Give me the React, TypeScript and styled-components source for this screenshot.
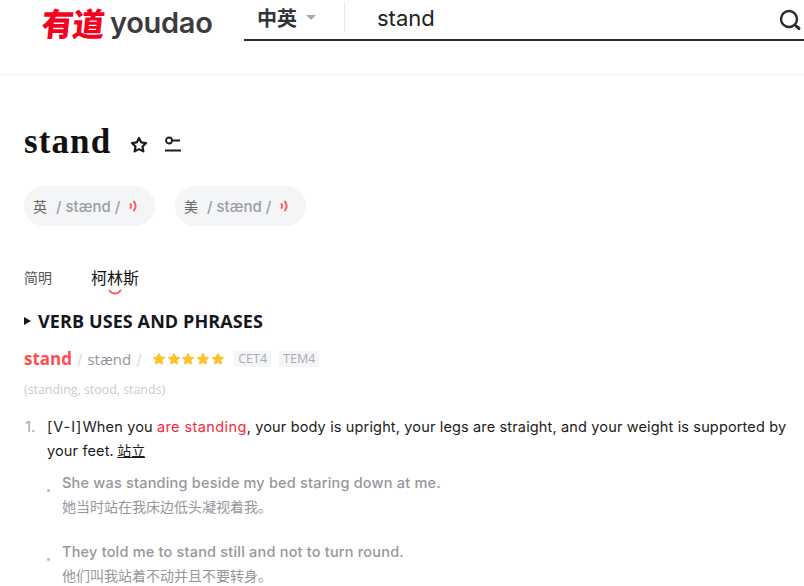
import React from "react";
import styled, { createGlobalStyle } from "styled-components";

const latin = `Inter, "Noto Sans CJK SC", sans-serif`;

const GlobalStyle = createGlobalStyle`
  html, body {
    margin: 0;
    padding: 0;
    background: #fff;
    overflow: hidden;
  }
  body {
    font-family: ${latin};
    color: #1a1a1a;
  }
`;

const Page = styled.div`
  width: 804px;
  height: 586px;
  overflow: hidden;
`;

const Header = styled.header`
  display: flex;
  align-items: flex-start;
  height: 75px;
  padding-left: 42px;
  box-sizing: border-box;
  border-bottom: 1px solid #f0f0f0;
`;

const Logo = styled.div`
  display: flex;
  align-items: center;
  width: 202px;
  height: 45px;
  flex: none;
`;

const LogoMark = styled.span`
  font: 900 32px/45px "Noto Sans CJK SC", sans-serif;
  color: #f5001e;
  letter-spacing: -1px;
  transform: skewX(-6deg);
`;

const LogoWord = styled.span`
  font: 600 29px/45px Inter, sans-serif;
  color: #3c3c3c;
  margin-left: 6px;
  letter-spacing: -0.3px;
`;

const SearchBar = styled.div`
  flex: 1;
  display: flex;
  align-items: center;
  height: 41px;
  box-sizing: border-box;
  border-bottom: 2px solid #2b2b30;
  padding-bottom: 5px;
`;

const LangPicker = styled.div`
  display: flex;
  align-items: center;
  gap: 9px;
  width: 101px;
  height: 30px;
  box-sizing: border-box;
  padding-left: 13px;
  border-right: 1px solid #e7e7e7;
  font: 700 20px "Noto Sans CJK SC", sans-serif;
  color: #33333a;
`;

const Caret = styled.i`
  width: 0;
  height: 0;
  border-left: 5px solid transparent;
  border-right: 5px solid transparent;
  border-top: 5px solid #a8a8a8;
`;

const QueryText = styled.div`
  flex: 1;
  padding-left: 32px;
  margin-top: 1px;
  font: 400 22px ${latin};
  color: #222;
`;

const SearchIcon = styled.svg`
  width: 24px;
  height: 24px;
  margin: 4px 2px 0 0;
`;

const Main = styled.main`
  padding: 0 16px 0 24px;
`;

const TitleRow = styled.div`
  display: flex;
  align-items: center;
  height: 44px;
  margin-top: 45px;
`;

const Title = styled.h1`
  margin: 0 19px 0 0;
  font: 700 35px/44px "Liberation Serif", serif;
  letter-spacing: 1.1px;
  color: #111;
`;

const TitleIcon = styled.svg`
  width: 18px;
  height: 18px;
  margin-right: 16px;
  margin-top: 6px;
`;

const PronRow = styled.div`
  display: flex;
  gap: 20px;
  margin-top: 22px;
`;

const PronPill = styled.div`
  display: flex;
  align-items: center;
  height: 40px;
  width: 131px;
  box-sizing: border-box;
  padding-left: 9px;
  border-radius: 20px;
  background: #f4f5f7;
  color: #9b9ea4;
  font-size: 15px;
  font-weight: 500;
`;

const PronLabel = styled.span`
  font: 400 14px "Noto Sans CJK SC", sans-serif;
  color: #666;
  margin-right: 9px;
`;

const Speaker = styled.svg`
  width: 10px;
  height: 14px;
  margin-left: 9px;
`;

const Tabs = styled.div`
  display: flex;
  align-items: center;
  margin-top: 40px;
  height: 22px;
`;

const Tab = styled.div<{ $active?: boolean }>`
  position: relative;
  font: 400 ${(p) => (p.$active ? "16px" : "14px")} "Noto Sans CJK SC", sans-serif;
  color: ${(p) => (p.$active ? "#111" : "#555")};
  margin-right: 39px;
`;

const TabSmile = styled.svg`
  position: absolute;
  left: 17px;
  bottom: -6px;
  width: 14px;
  height: 6px;
`;

const SectionTitle = styled.h2`
  display: flex;
  align-items: center;
  margin: 21px 0 0;
  height: 24px;
  font: 700 18px/24px "Open Sans", sans-serif;
  letter-spacing: 0.1px;
  color: #14171c;
`;

const Triangle = styled.i`
  width: 0;
  height: 0;
  margin-right: 7px;
  border-top: 4.5px solid transparent;
  border-bottom: 4.5px solid transparent;
  border-left: 7px solid #14171c;
`;

const WordRow = styled.div`
  display: flex;
  align-items: center;
  height: 24px;
  margin-top: 14px;
`;

const Headword = styled.span`
  font: 700 17px/24px "Open Sans", sans-serif;
  color: #ff4d4f;
`;

const Slash = styled.span`
  color: #d8d8dc;
  font-size: 15px;
  margin: 0 5px;
`;

const Phonetic = styled.span`
  font: 400 15px "Open Sans", sans-serif;
  color: #8f949c;
`;

const Stars = styled.div`
  display: flex;
  gap: 0.9px;
  margin: 0 9px 0 5px;
`;

const StarIcon = styled.svg`
  width: 14px;
  height: 14px;
`;

const Tag = styled.span`
  font: 400 12.5px/16px "Open Sans", sans-serif;
  color: #aaacb0;
  background: #f4f5f7;
  border-radius: 3px;
  padding: 0 4px;
  margin-right: 8px;
`;

const Forms = styled.div`
  margin-top: 10px;
  height: 18px;
  font: 400 12.4px/18px "Open Sans", sans-serif;
  color: #c9cacd;
`;

const Definition = styled.div`
  display: flex;
  margin-top: 16px;
`;

const DefNumber = styled.span`
  width: 23px;
  flex: none;
  font-size: 15px;
  line-height: 24px;
  padding-left: 1px;
  box-sizing: border-box;
  color: #a5a8ad;
`;

const DefBody = styled.div`
  flex: 1;
  font-size: 14.5px;
  line-height: 24px;
  letter-spacing: 0.15px;
  color: #1c1c20;
`;

const Grammar = styled.span`
  letter-spacing: 1px;
`;

const Red = styled.span`
  color: #f5283c;
  letter-spacing: 0.4px;
`;

const Link = styled.span`
  margin-left: -1px;
  font-family: "Noto Sans CJK SC", sans-serif;
  font-size: 14px;
  line-height: 0;
  letter-spacing: 0;
  text-decoration: underline;
`;

const ExampleList = styled.div`
  display: flex;
  flex-direction: column;
  gap: 22px;
  margin: 8px 0 0 23px;
`;

const Example = styled.div`
  display: flex;
`;

const Bullet = styled.i`
  flex: none;
  width: 3px;
  height: 3px;
  margin: 18px 12px 0 0;
  border-radius: 50%;
  background: #b5b5b8;
`;

const ExampleEn = styled.div`
  font-size: 14.5px;
  font-weight: 500;
  line-height: 24px;
  letter-spacing: 0.2px;
  color: #96969c;
`;

const ExampleZh = styled.div`
  margin-top: -1px;
  font: 400 14px/24px "Noto Sans CJK SC", sans-serif;
  color: #96969c;
`;

const STAR =
  "M12 2.6l2.9 5.9 6.5.9-4.7 4.6 1.1 6.5L12 17.5l-5.8 3 1.1-6.5-4.7-4.6 6.5-.9z";

const SpeakerGlyph = () => (
  <Speaker viewBox="0 0 10 14" fill="none" stroke="#ff5a55" strokeWidth="2" strokeLinecap="round">
    <path d="M1.5 5c.8 1.2.8 2.8 0 4" />
    <path d="M5 2.6c1.9 2.6 1.9 6.2 0 8.8" />
  </Speaker>
);

const examples = [
  ["She was standing beside my bed staring down at me.", "她当时站在我床边低头凝视着我。"],
  ["They told me to stand still and not to turn round.", "他们叫我站着不动并且不要转身。"],
];

export default function App() {
  return (
    <Page>
      <GlobalStyle />
      <Header>
        <Logo>
          <LogoMark>有道</LogoMark>
          <LogoWord>youdao</LogoWord>
        </Logo>
        <SearchBar>
          <LangPicker>
            中英
            <Caret />
          </LangPicker>
          <QueryText>stand</QueryText>
          <SearchIcon viewBox="0 0 24 24" fill="none" stroke="#2b2b30" strokeLinecap="round">
            <circle cx="11" cy="12" r="8" strokeWidth="2.4" />
            <path d="M18 19l3 2.5" strokeWidth="3" />
          </SearchIcon>
        </SearchBar>
      </Header>
      <Main>
        <TitleRow>
          <Title>stand</Title>
          <TitleIcon viewBox="0 0 24 24" fill="none" stroke="#1c1c20" strokeWidth="3" strokeLinejoin="round">
            <path d={STAR} />
          </TitleIcon>
          <TitleIcon viewBox="0 0 18 18" fill="none" stroke="#1c1c20" strokeWidth="1.8">
            <circle cx="5" cy="4.5" r="3" />
            <path d="M8 4.5h8M1 14.5h16" />
          </TitleIcon>
        </TitleRow>
        <PronRow>
          <PronPill>
            <PronLabel>英</PronLabel>/ stænd /
            <SpeakerGlyph />
          </PronPill>
          <PronPill>
            <PronLabel>美</PronLabel>/ stænd /
            <SpeakerGlyph />
          </PronPill>
        </PronRow>
        <Tabs>
          <Tab>简明</Tab>
          <Tab $active>
            柯林斯
            <TabSmile viewBox="0 0 14 6" fill="none" stroke="#ff5a55" strokeWidth="1.8" strokeLinecap="round">
              <path d="M1.5 1.5c2.5 4 8.5 4 11 0" />
            </TabSmile>
          </Tab>
        </Tabs>
        <SectionTitle>
          <Triangle />
          VERB USES AND PHRASES
        </SectionTitle>
        <WordRow>
          <Headword>stand</Headword>
          <Slash>/</Slash>
          <Phonetic>stænd</Phonetic>
          <Slash>/</Slash>
          <Stars>
            {[0, 1, 2, 3, 4].map((i) => (
              <StarIcon key={i} viewBox="0 0 24 24" fill="#fdc32c" stroke="#fdc32c" strokeWidth="2" strokeLinejoin="round">
                <path d={STAR} />
              </StarIcon>
            ))}
          </Stars>
          <Tag>CET4</Tag>
          <Tag>TEM4</Tag>
        </WordRow>
        <Forms>(standing, stood, stands)</Forms>
        <Definition>
          <DefNumber>1.</DefNumber>
          <DefBody>
            <Grammar>[V-I]</Grammar>When you <Red>are standing</Red>, your body is upright, your legs are straight, and
            your weight is supported by your feet. <Link>站立</Link>
          </DefBody>
        </Definition>
        <ExampleList>
          {examples.map(([en, zh]) => (
            <Example key={en}>
              <Bullet />
              <div>
                <ExampleEn>{en}</ExampleEn>
                <ExampleZh>{zh}</ExampleZh>
              </div>
            </Example>
          ))}
        </ExampleList>
      </Main>
    </Page>
  );
}
